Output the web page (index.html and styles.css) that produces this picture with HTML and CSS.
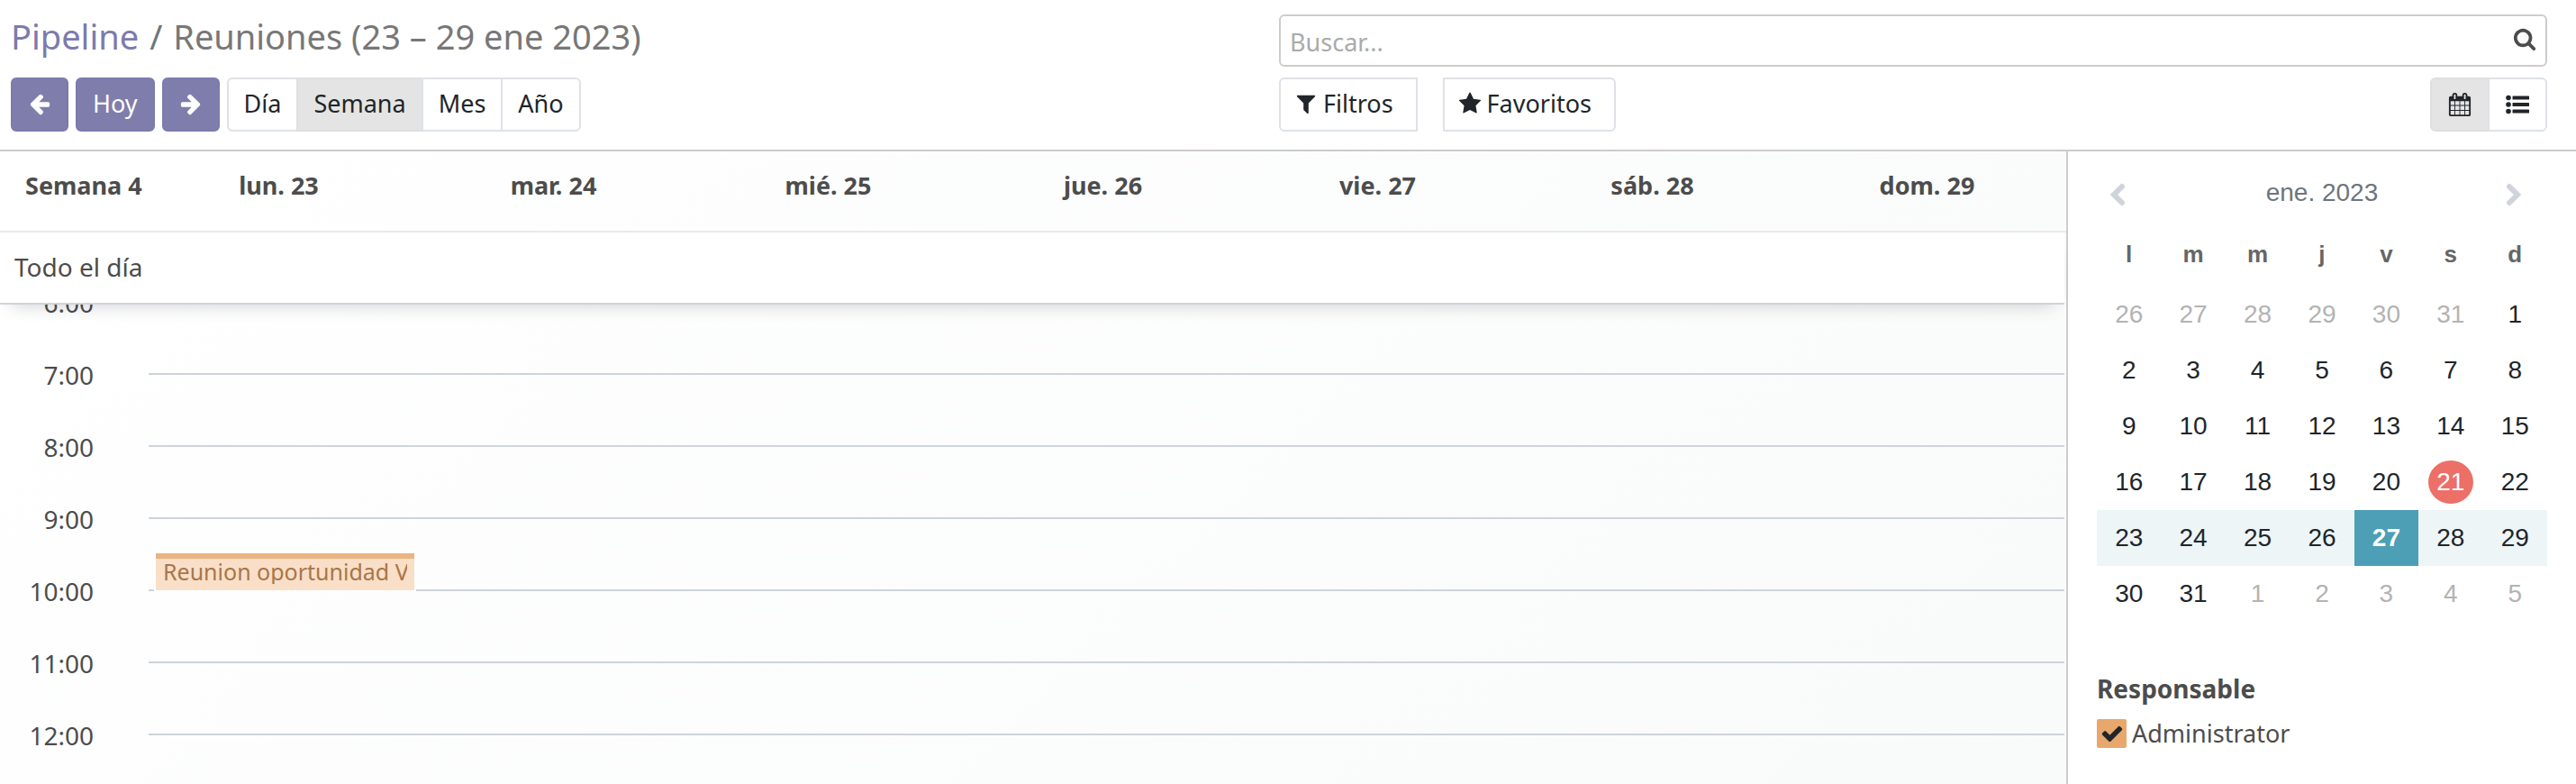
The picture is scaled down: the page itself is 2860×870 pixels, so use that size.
FILE: index.html
```html
<!DOCTYPE html>
<html lang="es">
<head>
<meta charset="utf-8">
<title>Reuniones</title>
<link rel="stylesheet" href="styles.css">
</head>
<body>
<header class="control-panel">
  <div class="panel-half">
    <h1 class="breadcrumb"><a href="#">Pipeline</a><span class="slash">/</span><span>Reuniones (23 – 29 ene 2023)</span></h1>
    <div class="toolbar">
      <button class="btn primary" aria-label="Anterior"><svg class="icon" viewBox="0 0 1792 1792"><path d="M1664 896v128q0 53-32.500 90.500t-84.500 37.500h-704l293 294q38 36 38 90t-38 90l-75 76q-37 37-90 37-52 0-91-37l-651-652q-37-37-37-90 0-52 37-91l651-650q38-38 91-38 52 0 90 38l75 74q38 38 38 91t-38 91l-293 293h704q52 0 84.500 37.500t32.500 90.500z"/></svg></button>
      <button class="btn primary">Hoy</button>
      <button class="btn primary" aria-label="Siguiente"><svg class="icon" viewBox="0 0 1792 1792"><path d="M1600 960q0 54-37 91l-651 651q-39 37-91 37-51 0-90-37l-75-75q-38-38-38-91t38-91l293-293h-704q-52 0-84.500-37.500t-32.500-90.500v-128q0-53 32.500-90.500t84.500-37.500h704l-293-294q-38-36-38-90t38-90l75-75q38-38 90-38 53 0 91 38l651 651q37 35 37 90z"/></svg></button>
      <div class="btn-group">
        <button class="btn">Día</button>
        <button class="btn active">Semana</button>
        <button class="btn">Mes</button>
        <button class="btn">Año</button>
      </div>
    </div>
  </div>
  <div class="panel-half">
    <div class="search">
      <input type="text" placeholder="Buscar..." aria-label="Buscar">
      <svg class="icon" viewBox="0 0 1792 1792"><path d="M1216 832q0-185-131.500-316.500t-316.500-131.500-316.500 131.500-131.500 316.500 131.500 316.500 316.500 131.500 316.500-131.500 131.500-316.500zm512 832q0 52-38 90t-90 38q-54 0-90-38l-343-342q-179 124-399 124-143 0-273.500-55.500t-225-150-150-225-55.500-273.500 55.500-273.500 150-225 225-150 273.500-55.500 273.500 55.500 225 150 150 225 55.500 273.500q0 220-124 399l343 343q37 37 37 90z"/></svg>
    </div>
    <div class="toolbar">
      <div class="filters">
        <button class="btn"><svg class="icon" viewBox="0 0 1792 1792"><path d="M1595 295q17 41-14 70l-493 493v742q0 42-39 59-13 5-25 5-27 0-45-19l-256-256q-19-19-19-45v-486l-493-493q-31-29-14-70 17-39 59-39h1280q42 0 59 39z"/></svg>Filtros</button>
        <button class="btn"><svg class="icon" viewBox="0 0 1792 1792"><path d="M1728 647q0 22-26 48l-363 354 86 500q1 7 1 20 0 21-10.500 35.500t-30.500 14.500q-19 0-40-12l-449-236-449 236q-22 12-40 12-21 0-31.500-14.500t-10.500-35.500q0-6 2-20l86-500-364-354q-25-27-25-48 0-37 56-46l502-73 225-455q19-41 49-41t49 41l225 455 502 73q56 9 56 46z"/></svg>Favoritos</button>
      </div>
      <div class="btn-group views">
        <button class="btn active" aria-label="Calendario"><svg class="icon" viewBox="0 0 1792 1792"><path d="M192 1664h288v-288h-288v288zm352 0h320v-288h-320v288zm-352-352h288v-320h-288v320zm352 0h320v-320h-320v320zm-352-384h288v-288h-288v288zm736 736h320v-288h-320v288zm-384-736h320v-288h-320v288zm768 736h288v-288h-288v288zm-384-352h320v-320h-320v320zm-352-864v-288q0-13-9.500-22.500t-22.500-9.500h-64q-13 0-22.500 9.500t-9.500 22.500v288q0 13 9.500 22.500t22.500 9.500h64q13 0 22.500-9.500t9.500-22.500zm736 864h288v-320h-288v320zm-384-384h320v-288h-320v288zm384 0h288v-288h-288v288zm32-480v-288q0-13-9.500-22.500t-22.500-9.500h-64q-13 0-22.500 9.500t-9.500 22.500v288q0 13 9.500 22.500t22.500 9.500h64q13 0 22.500-9.500t9.500-22.500zm384-64v1280q0 52-38 90t-90 38h-1408q-52 0-90-38t-38-90v-1280q0-52 38-90t90-38h128v-96q0-66 47-113t113-47h64q66 0 113 47t47 113v96h384v-96q0-66 47-113t113-47h64q66 0 113 47t47 113v96h128q52 0 90 38t38 90z"/></svg></button>
        <button class="btn" aria-label="Lista"><svg class="icon" viewBox="0 0 26 26"><circle cx="3" cy="5.500" r="2.800"/><circle cx="3" cy="13" r="2.800"/><circle cx="3" cy="20.500" r="2.800"/><rect x="7.500" y="3.500" width="18.500" height="4" rx=".5"/><rect x="7.500" y="11" width="18.500" height="4" rx=".5"/><rect x="7.500" y="18.500" width="18.500" height="4" rx=".5"/></svg></button>
      </div>
    </div>
  </div>
</header>
<main class="content">
  <section class="calendar">
    <div class="day-heads">
      <span class="week">Semana 4</span>
      <span>lun. 23</span><span>mar. 24</span><span>mié. 25</span><span>jue. 26</span><span>vie. 27</span><span>sáb. 28</span><span>dom. 29</span>
    </div>
    <div class="all-day">Todo el día</div>
    <div class="hours">
      <div class="slots">
        <div class="slot"><span class="hour">6:00</span><div class="lane"></div></div>
        <div class="slot"><span class="hour">7:00</span><div class="lane"></div></div>
        <div class="slot"><span class="hour">8:00</span><div class="lane"></div></div>
        <div class="slot"><span class="hour">9:00</span><div class="lane"><div class="event"><div class="event-title">Reunion oportunidad Venta</div></div></div></div>
        <div class="slot"><span class="hour">10:00</span><div class="lane"></div></div>
        <div class="slot"><span class="hour">11:00</span><div class="lane"></div></div>
        <div class="slot"><span class="hour">12:00</span><div class="lane"></div></div>
      </div>
    </div>
  </section>
  <aside class="sidebar">
    <div class="month">
      <button aria-label="Mes anterior"><svg viewBox="0 0 18 26"><path d="M14 4L5 13l9 9"/></svg></button>
      <span>ene. 2023</span>
      <button aria-label="Mes siguiente"><svg viewBox="0 0 18 26"><path d="M4 4l9 9-9 9"/></svg></button>
    </div>
    <table class="mini">
      <thead><tr><th>l</th><th>m</th><th>m</th><th>j</th><th>v</th><th>s</th><th>d</th></tr></thead>
      <tbody>
        <tr><td class="other">26</td><td class="other">27</td><td class="other">28</td><td class="other">29</td><td class="other">30</td><td class="other">31</td><td>1</td></tr>
        <tr><td>2</td><td>3</td><td>4</td><td>5</td><td>6</td><td>7</td><td>8</td></tr>
        <tr><td>9</td><td>10</td><td>11</td><td>12</td><td>13</td><td>14</td><td>15</td></tr>
        <tr><td>16</td><td>17</td><td>18</td><td>19</td><td>20</td><td><span class="today">21</span></td><td>22</td></tr>
        <tr class="current"><td>23</td><td>24</td><td>25</td><td>26</td><td class="selected">27</td><td>28</td><td>29</td></tr>
        <tr><td>30</td><td>31</td><td class="other">1</td><td class="other">2</td><td class="other">3</td><td class="other">4</td><td class="other">5</td></tr>
      </tbody>
    </table>
    <h2 class="filter-title">Responsable</h2>
    <label class="filter-item">
      <span class="check"><input type="checkbox" checked><svg viewBox="0 0 1792 1792"><path d="M1671 566q0 40-28 68l-724 724-136 136q-28 28-68 28t-68-28l-136-136-362-362q-28-28-28-68t28-68l136-136q28-28 68-28t68 28l294 295 656-657q28-28 68-28t68 28l136 136q28 28 28 68z"/></svg></span>
      Administrator
    </label>
  </aside>
</main>
</body>
</html>
```

FILE: styles.css
```css
* { box-sizing: border-box; }
body {
  margin: 0;
  height: 100vh;
  display: flex;
  flex-direction: column;
  overflow: hidden;
  background: #fff;
  color: #4c4c4c;
  font: 27px/40px "Noto Sans", "Open Sans", sans-serif;
}
button, input { font: inherit; margin: 0; }

.control-panel {
  display: grid;
  grid-template-columns: 1fr 1fr;
  padding: 16px 32px 20px 12px;
  border-bottom: 2px solid #ccc;
}
.panel-half {
  display: flex;
  flex-direction: column;
  gap: 12px;
}
.breadcrumb {
  display: flex;
  gap: 12px;
  height: 58px;
  margin: 0;
  font-size: 38px;
  font-weight: 400;
  line-height: 48px;
  color: #777;
}
.breadcrumb a { color: #7c7bad; text-decoration: none; }
.slash { color: #6c757d; }

.toolbar { display: flex; gap: 8px; }
.btn {
  display: flex;
  align-items: center;
  gap: 6px;
  height: 60px;
  padding: 0 17px 2px;
  border: 2px solid #dee2e6;
  background: #fff;
  color: #212529;
}
.btn.primary {
  border-color: #7c7bad;
  border-radius: 6px;
  background: #7f7dab;
  color: #fff;
}
.btn.active { background: #e4e4e4; border-color: #dedfe1; }
.icon { width: 26px; height: 26px; fill: currentColor; }
.btn-group { display: flex; }
.btn-group .btn + .btn { margin-left: -2px; }
.btn-group .btn:first-child { border-radius: 6px 0 0 6px; }
.btn-group .btn:last-child { border-radius: 0 6px 6px 0; }
.views { margin-left: auto; }
.views .btn { padding: 0 18px; }
.filters { display: flex; gap: 28px; }
.filters .btn { padding: 0 25px 2px 15px; }
.filters .btn:first-child { border-radius: 6px 0 0 6px; }
.filters .btn:last-child { border-radius: 0 6px 6px 0; }

.search {
  display: flex;
  align-items: center;
  height: 58px;
  padding: 0 10px;
  border: 2px solid #ccc;
  border-radius: 6px;
}
.search input {
  flex: 1;
  padding: 4px 0 0;
  border: 0;
  outline: 0;
  background: none;
}
.search input::placeholder { color: #aaa; opacity: 1; }
.search .icon { margin-bottom: 4px; }

.content {
  flex: 1;
  min-height: 0;
  display: grid;
  grid-template-columns: 1fr 566px;
}
.calendar {
  display: flex;
  flex-direction: column;
  min-height: 0;
  background: linear-gradient(135deg, #fff, #f9fafa);
}
.day-heads {
  display: grid;
  grid-template-columns: 157px repeat(7, 1fr);
  padding: 18px 2px 30px 0;
  border-bottom: 2px solid #e9e9ef;
  font-weight: 700;
  text-align: center;
}
.day-heads .week { padding-left: 28px; text-align: left; white-space: nowrap; }
.all-day {
  z-index: 1;
  margin-right: 2px;
  padding: 18px 16px 20px;
  border-bottom: 2px solid #ced4da;
  background: #fff;
  box-shadow: 0 12px 20px -12px rgba(0, 0, 0, .2);
  font-size: 28px;
}
.hours { flex: 1; min-height: 0; overflow: hidden; }
.slots { margin: -4px 2px 0 0; }
.slot {
  display: grid;
  grid-template-columns: 165px 1fr;
  height: 80px;
}
.hour {
  height: 40px;
  margin-top: -18px;
  padding-right: 61px;
  text-align: right;
  font-size: 28px;
}
.lane { position: relative; border-top: 2px solid #ced4da; }
.event {
  position: absolute;
  z-index: 1;
  top: 38px;
  left: 8px;
  width: calc(100% / 7 - 17px);
  height: 41px;
  padding: 0 8px;
  border-top: 6px solid #ebb482;
  background: #f9dfc7;
  color: #a97549;
  box-shadow: 0 0 0 2px #fff;
}
.event-title {
  overflow: hidden;
  white-space: nowrap;
  font-size: 25px;
  line-height: 28px;
}

.sidebar {
  padding: 24px 32px 0;
  border-left: 2px solid #ccc;
}
.month {
  display: flex;
  align-items: center;
  justify-content: space-between;
  height: 44px;
  padding: 0 28px 0 14px;
  color: #6c757d;
  font-family: "Liberation Sans", Arial, sans-serif;
  font-size: 28px;
}
.month span { flex: 1; padding-left: 14px; text-align: center; }
.month button {
  display: flex;
  padding: 4px 0 0;
  border: 0;
  background: none;
}
.month svg {
  width: 18px;
  height: 26px;
  fill: none;
  stroke: #ced4da;
  stroke-width: 6;
  stroke-linecap: round;
}
.mini {
  width: 100%;
  margin-top: 14px;
  border-collapse: collapse;
  table-layout: fixed;
  font-family: "Liberation Sans", Arial, sans-serif;
  text-align: center;
  color: #212529;
}
.mini th { height: 68px; padding: 0 0 4px; color: #666; font-size: 26px; }
.mini td { height: 62px; padding: 0; font-size: 28px; }
.mini .other { color: #b3b3b3; }
.mini .current { background: #edf5f7; }
.mini .selected { background: #4c9fb5; color: #fff; font-weight: 700; }
.today {
  display: block;
  width: 50px;
  height: 48px;
  margin: 0 auto;
  border-radius: 50%;
  background: #ec6f68;
  color: #fff;
  line-height: 48px;
}
.filter-title { margin: 54px 0 0; font-size: 28px; font-weight: 700; line-height: 40px; }
.filter-item { display: flex; align-items: center; gap: 6px; margin-top: 10px; }
.check { display: grid; }
.check > * { grid-area: 1 / 1; place-self: center; }
.check input {
  appearance: none;
  width: 33px;
  height: 32px;
  border-radius: 2px;
  background: #e8a76d;
}
.check svg { width: 26px; height: 26px; fill: #212529; pointer-events: none; }
```
